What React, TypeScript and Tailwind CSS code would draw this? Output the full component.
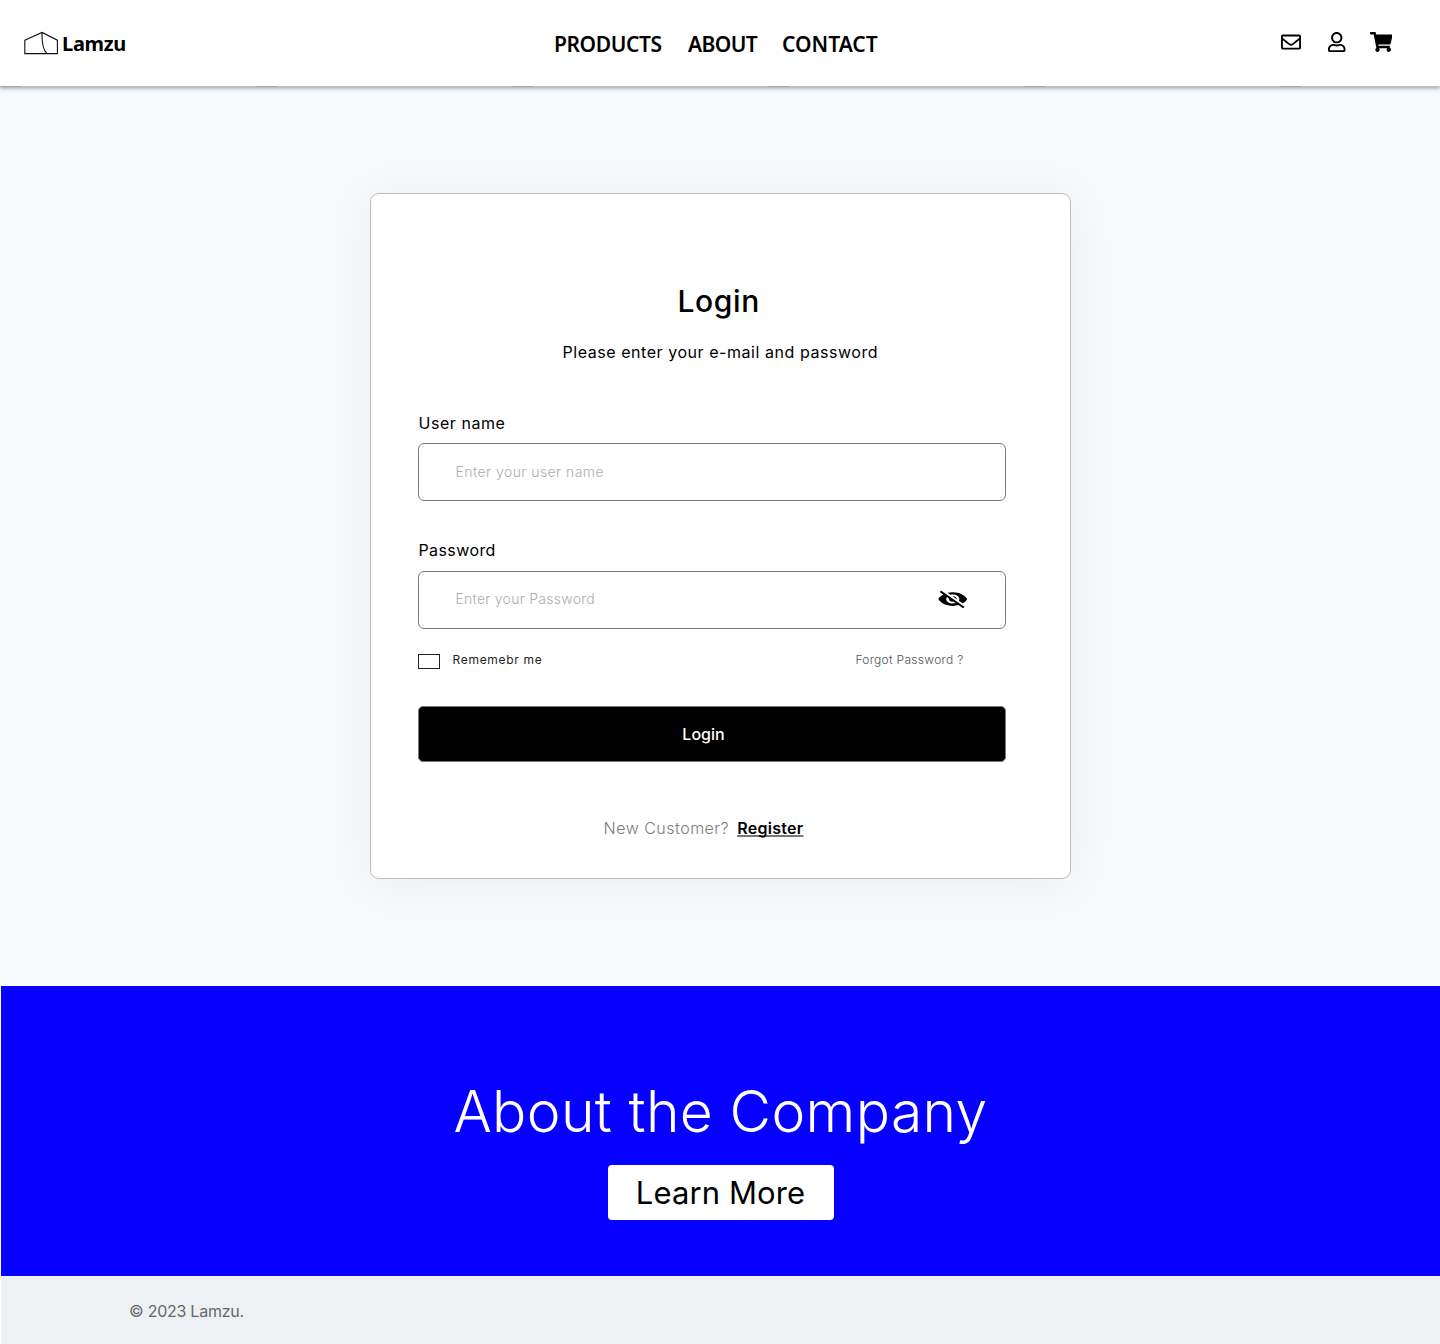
import { FaRegEnvelope, FaRegUser, FaShoppingCart } from 'react-icons/fa'
import { MdVisibilityOff } from 'react-icons/md'

function Header() {
  return (
    <header className="relative z-10 flex h-[86px] items-center bg-white shadow-[0_2px_4px_rgba(0,0,0,0.4)]">
      <div className="ml-6 flex w-[530px] items-center">
        <svg width="35" height="24" viewBox="0 0 35 24" fill="none" stroke="#111" strokeWidth="1.1" className="mb-px">
          <path d="M.8 9.2 18 1.4 33.4 9.2V22.6H.8Z" />
          <path d="M18 1.4C17.8 11 19 19 23 22.6" />
        </svg>
        <span className="mt-px ml-[3px] font-['Noto_Sans',sans-serif] text-[20px] leading-6 font-bold tracking-[-0.3px]">Lamzu</span>
      </div>
      <nav className="mt-px flex items-center font-['Noto_Sans',sans-serif] text-[21px] leading-6 font-semibold">
        <a className="w-[134px] tracking-[-0.4px]">PRODUCTS</a>
        <a className="w-[94px] tracking-[-0.6px]">ABOUT</a>
        <a>CONTACT</a>
      </nav>
      <div className="mr-[48px] mb-[3px] ml-auto flex items-center">
        <FaRegEnvelope className="h-5 w-5" />
        <FaRegUser className="ml-[27px] h-5 w-[17.5px]" />
        <FaShoppingCart className="ml-[24px] h-5 w-[22.5px]" />
      </div>
      <div className="absolute inset-x-0 -bottom-px h-px bg-[repeating-linear-gradient(90deg,#a6a9ab_0px,#a6a9ab_21px,#c0c3c5_21px,#c0c3c5_256px)]" />
    </header>
  )
}

function LoginCard() {
  return (
    <form className="flex h-[686px] w-[701px] flex-col rounded-[9px] border border-[#bdbdbd] bg-white pt-[87px] pr-16 pl-[47px] font-['Inter',sans-serif] shadow-[0_4px_50px_rgba(0,0,0,0.05)]">
      <h1 className="ml-[260px] h-10 text-[30px] leading-10 font-medium tracking-[0.6px]">Login</h1>
      <p className="mt-[19px] ml-[145px] h-6 text-[16px] leading-6 tracking-[0.55px] whitespace-nowrap">Please enter your e-mail and password</p>

      <label className="mt-[47px] ml-px h-6 text-[16px] leading-6 tracking-[0.55px]">User name</label>
      <div className="mt-2 flex h-[58px] items-center rounded-[6px] border border-[#7a7a7a] pl-[37px]">
        <span className="text-[14px] leading-5 font-light tracking-[0.45px] text-[#adadad]">Enter your user name</span>
      </div>

      <label className="mt-[37px] ml-px h-6 text-[16px] leading-6 tracking-[0.4px]">Password</label>
      <div className="mt-[9px] flex h-[58px] items-center justify-between rounded-[6px] border border-[#7a7a7a] pr-[36px] pb-[2px] pl-[37px]">
        <span className="text-[14px] leading-5 font-light tracking-[0.27px] text-[#adadad]">Enter your Password</span>
        <MdVisibilityOff preserveAspectRatio="none" className="h-[22px] w-[31.6px]" />
      </div>

      <div className="mt-[21px] flex h-5 items-center text-[12px] leading-5">
        <span className="mt-[2px] h-[15px] w-[22px] border border-[#222]" />
        <span className="ml-[13px] font-normal tracking-[0.7px] text-[#222]">Rememebr me</span>
        <span className="mr-[42px] ml-auto font-light tracking-[0.3px] text-[#555]">Forgot Password ?</span>
      </div>

      <button type="button" className="mt-9 h-14 rounded-[5px] border border-[#777] bg-black pr-4 text-[16px] leading-6 font-medium text-white">
        Login
      </button>

      <p className="mt-[54px] ml-[186px] flex h-6 items-center text-[16px] leading-6">
        <span className="font-light tracking-[0.5px] text-[#7c7c7c]">New Customer?</span>
        <a className="ml-2 font-semibold tracking-[0.3px] underline decoration-[#777] decoration-2 underline-offset-1 [text-decoration-skip-ink:none]">Register</a>
      </p>
    </form>
  )
}

export default function App() {
  return (
    <div className="flex h-[1344px] w-[1440px] flex-col overflow-hidden bg-[#f6fafd] text-black">
      <Header />
      <main className="flex h-[900px] items-start justify-center pt-[107px]">
        <LoginCard />
      </main>
      <section className="flex h-[290px] flex-col items-center border-l border-white bg-[#0500ff] pt-[90px] font-['Inter',sans-serif]">
        <h2 className="h-[72px] text-[57px] leading-[72px] font-light tracking-[0.35px] whitespace-nowrap text-white">About the Company</h2>
        <button type="button" className="mt-[17px] h-[55px] w-[226px] rounded-[4px] bg-white text-[31px] leading-[55px] tracking-[0.1px]">
          Learn More
        </button>
      </section>
      <footer className="h-[68px] border-t border-l border-t-[#f8f8f8] border-l-white bg-[#edf1f4] pt-[22px] pl-32 font-['Inter',sans-serif] text-[16px] leading-6 tracking-[-0.25px] text-[#666]">
        © 2023 Lamzu.
      </footer>
    </div>
  )
}
